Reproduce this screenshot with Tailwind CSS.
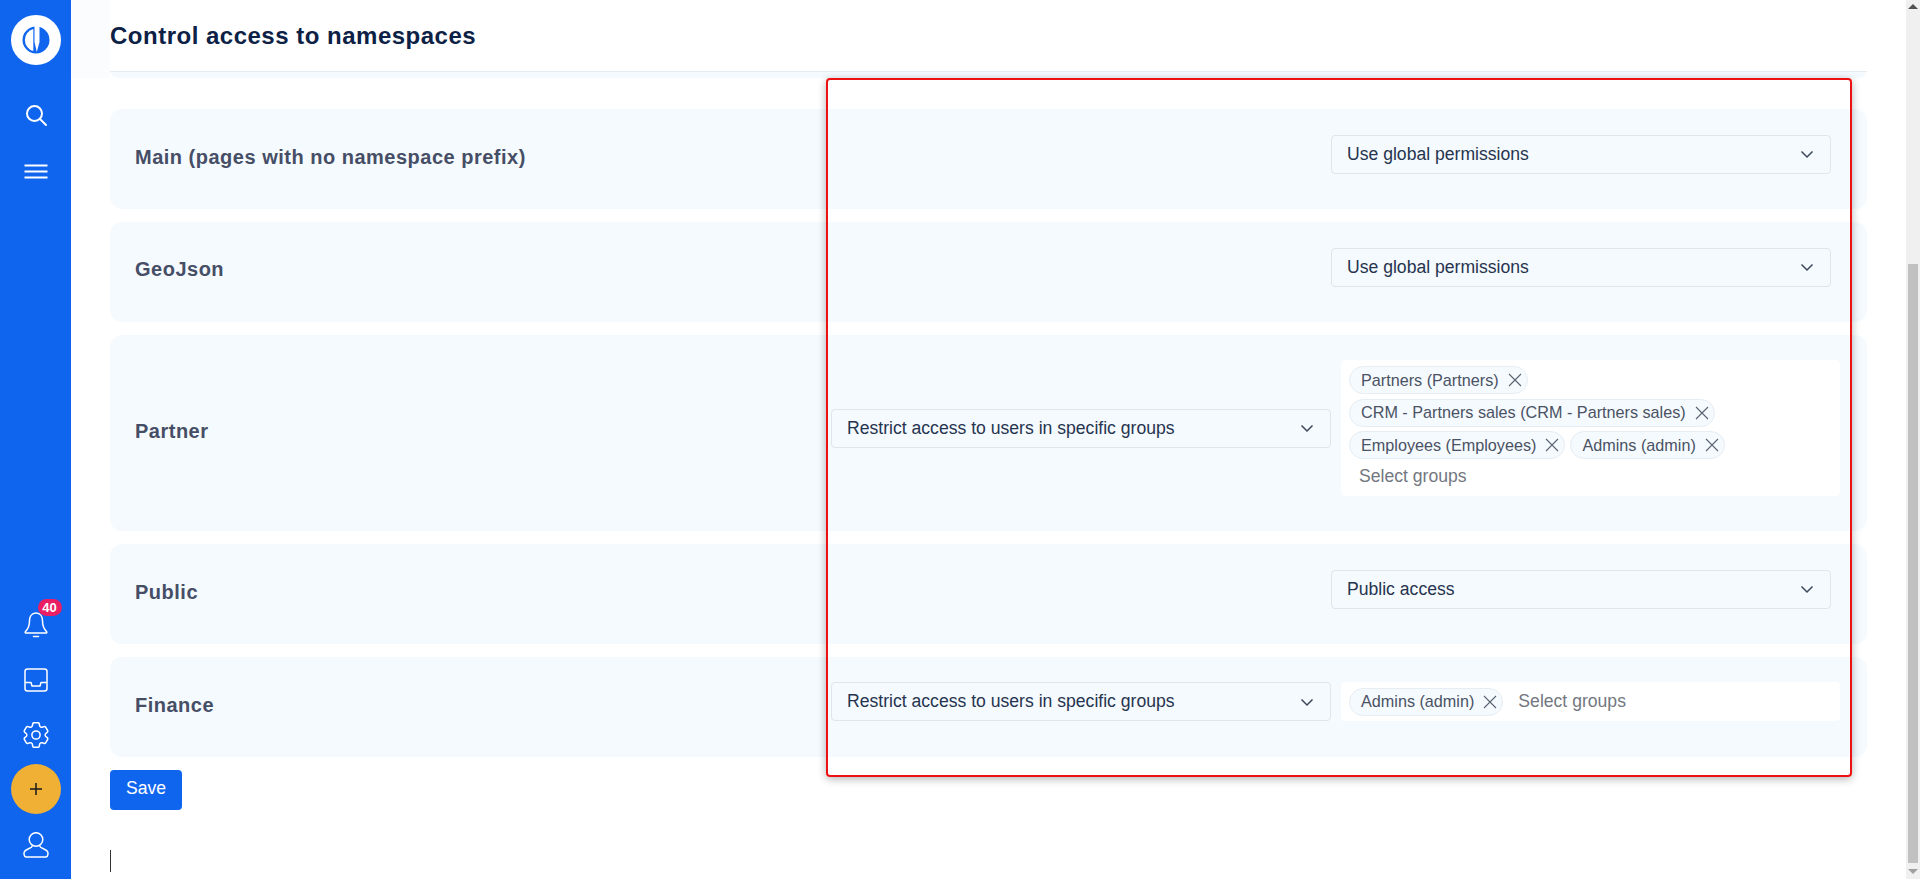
<!DOCTYPE html>
<html lang="en">
<head>
    <meta charset="UTF-8">
    <title>Control access to namespaces</title>
    <script src="https://cdn.jsdelivr.net/npm/@tailwindcss/browser@4"></script>
</head>
<body class="h-screen overflow-hidden bg-white font-['Liberation_Sans',Arial,sans-serif]">
    <div class="flex h-[879px]">
        <!-- sidebar -->
        <aside class="w-[71px] shrink-0 bg-[#1065ee] flex flex-col items-center text-white">
            <svg class="mt-[15px] size-[50px]" viewBox="0 0 50 50" fill="none">
                <circle cx="25" cy="25" r="19.25" stroke="white" stroke-width="11.5"/>
                <path d="M22.3 14A11.4 11.4 0 0 0 22.3 36Z" fill="white"/>
                <path d="M23.5 10H28.5L28.5 27L25.8 37L23.5 27Z" fill="white"/>
            </svg>
            <svg class="mt-[38px] size-6" viewBox="0 0 24 24" fill="none" stroke="white" stroke-width="2">
                <circle cx="10.5" cy="10.5" r="7.5"/>
                <path d="M16 16l6 6" stroke-linecap="round"/>
            </svg>
            <svg class="mt-[33px] size-6" viewBox="0 0 24 24" fill="none" stroke="white" stroke-width="2">
                <path d="M0.5 5.5h23M0.5 11.5h23M0.5 17.5h23"/>
            </svg>
            <div class="relative mt-auto h-[26px] w-[24px]">
                <svg class="h-[26px] w-[24px]" viewBox="0 0 24 26" fill="none" stroke="white" stroke-width="1.5" stroke-linejoin="round" stroke-linecap="round">
                    <path d="M12 1C7.5 1 5.5 5 5.5 9C5.5 14 4 17 1.5 19.5C0.8 20.3 1.3 21 2.2 21H21.8C22.7 21 23.2 20.3 22.5 19.5C20 17 18.5 14 18.5 9C18.5 5 16.5 1 12 1ZM9.5 24.5H14.5"/>
                </svg>
                <span class="absolute -top-[13px] left-[14px] h-[17px] w-[24px] rounded-full bg-[#e91e63] text-center text-[13px] leading-[17px] font-bold text-white">40</span>
            </div>
            <svg class="mt-[30px] size-6" viewBox="0 0 24 24" fill="none" stroke="white" stroke-width="1.5" stroke-linejoin="round">
                <rect x="1" y="1" width="22" height="22" rx="2.5"/>
                <path d="M1 14.5h6l1 3.5h8l1-3.5h6"/>
            </svg>
            <svg class="mt-[30px] size-[26px]" viewBox="2.5 2.5 19 19" fill="none" stroke="white" stroke-width="1.1" stroke-linejoin="round">
                <path d="M9.594 3.94c.09-.542.56-.94 1.11-.94h2.593c.55 0 1.02.398 1.11.94l.213 1.281c.063.374.313.686.645.87.074.04.147.083.22.127.325.196.72.257 1.075.124l1.217-.456a1.125 1.125 0 0 1 1.37.49l1.296 2.247a1.125 1.125 0 0 1-.26 1.431l-1.003.827c-.293.241-.438.613-.43.992a7.723 7.723 0 0 1 0 .255c-.008.378.137.75.43.991l1.004.827c.424.35.534.955.26 1.43l-1.298 2.247a1.125 1.125 0 0 1-1.369.491l-1.217-.456c-.355-.133-.75-.072-1.076.124a6.47 6.47 0 0 1-.22.128c-.331.183-.581.495-.644.869l-.213 1.281c-.09.543-.56.94-1.11.94h-2.594c-.55 0-1.019-.398-1.11-.94l-.213-1.281c-.062-.374-.312-.686-.644-.87a6.52 6.52 0 0 1-.22-.127c-.325-.196-.72-.257-1.076-.124l-1.217.456a1.125 1.125 0 0 1-1.369-.49l-1.297-2.247a1.125 1.125 0 0 1 .26-1.431l1.004-.827c.292-.24.437-.613.43-.991a6.932 6.932 0 0 1 0-.255c.007-.38-.138-.751-.43-.992l-1.004-.827a1.125 1.125 0 0 1-.26-1.43l1.297-2.247a1.125 1.125 0 0 1 1.37-.491l1.216.456c.356.133.751.072 1.076-.124.072-.044.146-.086.22-.128.332-.183.582-.495.644-.869l.214-1.28Z"/>
                <path d="M15 12a3 3 0 1 1-6 0 3 3 0 0 1 6 0Z"/>
            </svg>
            <button class="mt-[16px] size-[50px] shrink-0 rounded-full bg-[#efb035] flex items-center justify-center">
                <svg class="size-3" viewBox="0 0 12 12" stroke="#1a1a1a" stroke-width="1.5"><path d="M6 0v12M0 6h12"/></svg>
            </button>
            <svg class="mt-[18px] mb-[21px] size-[26px]" viewBox="0 0 26 26" fill="none" stroke="white" stroke-width="1.5" stroke-linejoin="round">
                <circle cx="13" cy="7.5" r="6.8"/>
                <path d="M9 13.5v1c0 1.5-6 2.5-7.5 5-.8 1.5-.8 5 1.5 5.5h20c2.3-.5 2.3-4 1.5-5.5-1.5-2.5-7.5-3.5-7.5-5v-1"/>
            </svg>
        </aside>

        <main class="relative flex-1 pl-[39px]">
            <div class="-ml-[39px] bg-linear-to-r from-[#fbfcfd] from-[39px] to-white to-[39px] pl-[39px]">
                <div class="mr-[39px] h-[78px] rounded-b-lg bg-[#f5fafe]">
                    <div class="h-[72px] bg-white border-b border-[#e4edf5] flex items-center">
                        <h2 class="text-[24px] font-bold tracking-[0.5px] text-[#0c2145]">Control access to namespaces</h2>
                    </div>
                </div>
            </div>

            <div class="mr-[39px] mt-[31px] flex flex-col gap-[13px]">
                <div class="h-[100px] rounded-xl bg-[#f5fafe] flex items-center pl-[25px] pr-[36px]">
                    <span class="flex-1 -mt-[5px] text-[20px] font-bold tracking-[0.5px] text-[#464e66]">Main (pages with no namespace prefix)</span>
                    <div class="-mt-[10px] w-[500px] h-[39px] rounded border border-[#dfe5ec] flex items-center justify-between px-[15px] text-[17.6px] text-[#26344f]">
                        Use global permissions
                        <svg class="size-4" viewBox="0 0 16 16" fill="none" stroke="#3b4658" stroke-width="1.5"><path d="M2.5 5.5L8 11l5.5-5.5"/></svg>
                    </div>
                </div>
                <div class="h-[100px] rounded-xl bg-[#f5fafe] flex items-center pl-[25px] pr-[36px]">
                    <span class="flex-1 -mt-[6px] text-[20px] font-bold tracking-[0.5px] text-[#464e66]">GeoJson</span>
                    <div class="-mt-[10px] w-[500px] h-[39px] rounded border border-[#dfe5ec] flex items-center justify-between px-[15px] text-[17.6px] text-[#26344f]">
                        Use global permissions
                        <svg class="size-4" viewBox="0 0 16 16" fill="none" stroke="#3b4658" stroke-width="1.5"><path d="M2.5 5.5L8 11l5.5-5.5"/></svg>
                    </div>
                </div>
                <div class="h-[196px] rounded-xl bg-[#f5fafe] flex items-center pl-[25px] pr-[27px]">
                    <span class="flex-1 -mt-[5px] text-[20px] font-bold tracking-[0.5px] text-[#464e66]">Partner</span>
                    <div class="-mt-[10px] w-[500px] h-[39px] rounded border border-[#dfe5ec] flex items-center justify-between px-[15px] text-[17.6px] text-[#26344f]">
                        Restrict access to users in specific groups
                        <svg class="size-4" viewBox="0 0 16 16" fill="none" stroke="#3b4658" stroke-width="1.5"><path d="M2.5 5.5L8 11l5.5-5.5"/></svg>
                    </div>
                    <div class="ml-[10px] -mt-[10px] w-[499px] h-[136px] rounded bg-white pl-[8px] pt-[6px] flex flex-col gap-[4.5px]">
                        <div class="flex">
                            <span class="h-[28px] rounded-full border border-[#e6edf3] bg-[#f5fafe] pl-[11px] pr-[5px] flex items-center gap-[9px] text-[16.2px] text-[#4a5264]">Partners (Partners)
                                <svg class="size-[14px]" viewBox="0 0 14 14" stroke="#5a6272" stroke-width="1.1"><path d="M1 1l12 12M13 1L1 13"/></svg>
                            </span>
                        </div>
                        <div class="flex">
                            <span class="h-[28px] rounded-full border border-[#e6edf3] bg-[#f5fafe] pl-[11px] pr-[5px] flex items-center gap-[9px] text-[16.2px] text-[#4a5264]">CRM - Partners sales (CRM - Partners sales)
                                <svg class="size-[14px]" viewBox="0 0 14 14" stroke="#5a6272" stroke-width="1.1"><path d="M1 1l12 12M13 1L1 13"/></svg>
                            </span>
                        </div>
                        <div class="flex gap-[5px]">
                            <span class="h-[28px] rounded-full border border-[#e6edf3] bg-[#f5fafe] pl-[11px] pr-[5px] flex items-center gap-[9px] text-[16.2px] text-[#4a5264]">Employees (Employees)
                                <svg class="size-[14px]" viewBox="0 0 14 14" stroke="#5a6272" stroke-width="1.1"><path d="M1 1l12 12M13 1L1 13"/></svg>
                            </span>
                            <span class="h-[28px] rounded-full border border-[#e6edf3] bg-[#f5fafe] pl-[11px] pr-[5px] flex items-center gap-[9px] text-[16.2px] text-[#4a5264]">Admins (admin)
                                <svg class="size-[14px]" viewBox="0 0 14 14" stroke="#5a6272" stroke-width="1.1"><path d="M1 1l12 12M13 1L1 13"/></svg>
                            </span>
                        </div>
                        <div class="-mt-[0.5px] ml-[10px] text-[17.6px] text-[#737780]">Select groups</div>
                    </div>
                </div>
                <div class="h-[100px] rounded-xl bg-[#f5fafe] flex items-center pl-[25px] pr-[36px]">
                    <span class="flex-1 -mt-[5px] text-[20px] font-bold tracking-[0.5px] text-[#464e66]">Public</span>
                    <div class="-mt-[10px] w-[500px] h-[39px] rounded border border-[#dfe5ec] flex items-center justify-between px-[15px] text-[17.6px] text-[#26344f]">
                        Public access
                        <svg class="size-4" viewBox="0 0 16 16" fill="none" stroke="#3b4658" stroke-width="1.5"><path d="M2.5 5.5L8 11l5.5-5.5"/></svg>
                    </div>
                </div>
                <div class="h-[100px] rounded-xl bg-[#f5fafe] flex items-center pl-[25px] pr-[27px]">
                    <span class="flex-1 -mt-[5px] text-[20px] font-bold tracking-[0.5px] text-[#464e66]">Finance</span>
                    <div class="-mt-[11px] w-[500px] h-[39px] rounded border border-[#dfe5ec] flex items-center justify-between px-[15px] text-[17.6px] text-[#26344f]">
                        Restrict access to users in specific groups
                        <svg class="size-4" viewBox="0 0 16 16" fill="none" stroke="#3b4658" stroke-width="1.5"><path d="M2.5 5.5L8 11l5.5-5.5"/></svg>
                    </div>
                    <div class="ml-[10px] -mt-[11px] w-[499px] h-[39px] rounded bg-white pl-[8px] flex items-center gap-[15px]">
                        <span class="h-[28px] rounded-full border border-[#e6edf3] bg-[#f5fafe] pl-[11px] pr-[5px] flex items-center gap-[9px] text-[16.2px] text-[#4a5264]">Admins (admin)
                            <svg class="size-[14px]" viewBox="0 0 14 14" stroke="#5a6272" stroke-width="1.1"><path d="M1 1l12 12M13 1L1 13"/></svg>
                        </span>
                        <span class="text-[17.6px] text-[#737780]">Select groups</span>
                    </div>
                </div>
            </div>

            <button class="mt-[13px] h-[40px] w-[72px] rounded bg-[#1065ee] pb-[3px] text-[17.6px] text-white">Save</button>
            <div class="mt-[40px] h-[22px] w-px bg-[#333]"></div>

            <!-- annotation from the screenshot -->
            <div class="absolute left-[755px] top-[78px] h-[699px] w-[1026px] rounded border-2 border-[#ee1111] shadow-[0_2px_8px_rgba(0,0,0,0.3)]"></div>
        </main>

        <!-- scrollbar -->
        <div class="w-[14px] shrink-0 bg-[#f0f0f0] flex flex-col items-center">
            <div class="mt-[4px] h-0 w-0 border-x-[5px] border-b-[5px] border-x-transparent border-b-[#505050]"></div>
            <div class="mt-[255px] w-[10px] h-[599px] bg-[#c1c1c1]"></div>
            <div class="mt-[6px] h-0 w-0 border-x-[5px] border-t-[5px] border-x-transparent border-t-[#a0a0a0]"></div>
        </div>
    </div>
</body>
</html>
